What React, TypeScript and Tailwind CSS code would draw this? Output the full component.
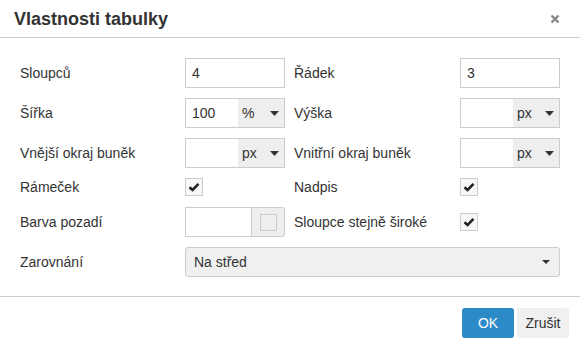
import React from 'react';

function Caret() {
  return (
    <svg width="9" height="5" viewBox="0 0 9 5" className="shrink-0">
      <path d="M0 0 L9 0 L4.5 5 Z" fill="#333" />
    </svg>
  );
}

function TextBox({ value = '' }: { value?: string }) {
  return (
    <div className="h-[30px] w-[100px] border border-[#ccc] bg-white px-[6px] flex items-center text-[14px] text-[#333]">
      {value}
    </div>
  );
}

function UnitBox({ value = '', unit }: { value?: string; unit: string }) {
  return (
    <div className="h-[30px] w-[100px] border border-[#ccc] bg-white flex text-[14px] text-[#333]">
      <div className="flex-1 px-[6px] flex items-center">{value}</div>
      <div className="w-[46px] bg-[#eee] flex items-center justify-between pl-[4px] pr-[5px]">
        <span>{unit}</span>
        <Caret />
      </div>
    </div>
  );
}

function Check() {
  return (
    <div className="h-[18px] w-[18px] border border-[#ccc] bg-[#f7f7f7] flex items-center justify-center">
      <svg width="12" height="10" viewBox="0 0 12 10">
        <path d="M1.5 5.2 L4.6 8 L10.5 1.8" fill="none" stroke="#222" strokeWidth="2.6" />
      </svg>
    </div>
  );
}

function Label({ children, right }: { children: React.ReactNode; right?: boolean }) {
  return (
    <div className={`flex items-center text-[14px] text-[#333] ${right ? 'pl-[9px]' : ''}`}>
      {children}
    </div>
  );
}

export default function App() {
  return (
    <div className="w-[580px] h-[348px] bg-white font-['Liberation_Sans',Arial,sans-serif] text-[#333] overflow-hidden">
      <div className="h-[38px] border-b border-[#ccc] flex items-center justify-between pl-[14px] pr-[20px]">
        <h1 className="text-[18px] font-bold text-[#333] pt-[1px]">Vlastnosti tabulky</h1>
        <svg width="10" height="10" viewBox="0 0 10 10" className="mt-[1px]">
          <path d="M1.5 1.5 L8.5 8.5 M8.5 1.5 L1.5 8.5" stroke="#888" strokeWidth="2.4" />
        </svg>
      </div>

      <div className="pt-[20px] pb-[19px] px-[20px] border-b border-[#ccc]">
        <div className="grid grid-cols-[165px_100px_175px_100px] grid-rows-[30px_30px_30px_19px_30px_30px] gap-y-[10px]">
          <Label>Sloupců</Label>
          <TextBox value="4" />
          <Label right>Řádek</Label>
          <TextBox value="3" />

          <Label>Šířka</Label>
          <UnitBox value="100" unit="%" />
          <Label right>Výška</Label>
          <UnitBox unit="px" />

          <Label>Vnější okraj buněk</Label>
          <UnitBox unit="px" />
          <Label right>Vnitřní okraj buněk</Label>
          <UnitBox unit="px" />

          <Label>Rámeček</Label>
          <div className="flex items-start">
            <Check />
          </div>
          <Label right>Nadpis</Label>
          <div className="flex items-start">
            <Check />
          </div>

          <Label>Barva pozadí</Label>
          <div className="flex h-[30px]">
            <div className="w-[67px] border border-[#ccc] bg-white" />
            <div className="w-[33px] border border-l-0 border-[#ccc] bg-[#eee] rounded-r-[3px] flex items-center justify-center">
              <div className="h-[17px] w-[17px] border border-[#ccc] bg-[#eee]" />
            </div>
          </div>
          <Label right>Sloupce stejně široké</Label>
          <div className="flex items-center">
            <Check />
          </div>

          <Label>Zarovnání</Label>
          <div className="col-span-3 h-[30px] border border-[#ccc] bg-[#f0f0f0] rounded-[3px] flex items-center justify-between pl-[8px] pr-[9px] text-[14px] text-[#333]">
            <span>Na střed</span>
            <svg width="8" height="4" viewBox="0 0 8 4">
              <path d="M0 0 L8 0 L4 4 Z" fill="#333" />
            </svg>
          </div>
        </div>
      </div>

      <div className="flex justify-end gap-[3px] pt-[11px] pr-[11px]">
        <button className="h-[30px] w-[52px] rounded-[3px] bg-[#2d8ac8] text-white text-[14px]">OK</button>
        <button className="h-[30px] w-[52px] rounded-[3px] bg-[#f0f0f0] text-[#333] text-[14px]">Zrušit</button>
      </div>
    </div>
  );
}
